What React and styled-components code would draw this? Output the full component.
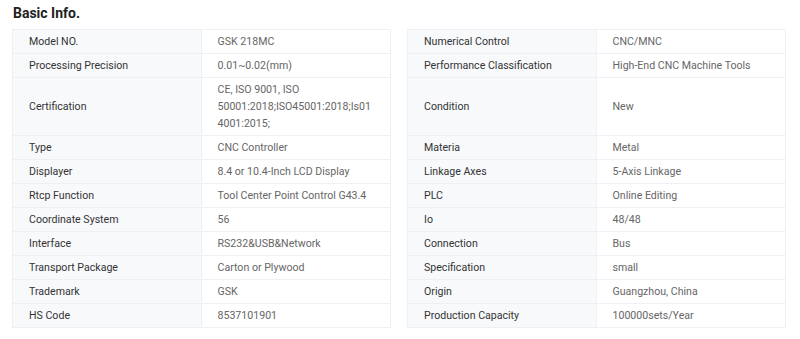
import React from 'react';
import styled, { createGlobalStyle } from 'styled-components';

const GlobalStyle = createGlobalStyle`
  html, body {
    margin: 0;
    padding: 0;
    background: #fff;
    font-family: Roboto, "Liberation Sans", Arial, sans-serif;
  }
`;

const Page = styled.div`
  width: 800px;
  padding: 4px 14px 0 12px;
  box-sizing: border-box;
`;

const Title = styled.h2`
  margin: 0 0 7px 1px;
  font-size: 14px;
  line-height: 18px;
  font-weight: 700;
  color: #222;
`;

// two pairs per line; pairs on the same line share a height
const SpecGrid = styled.div`
  display: grid;
  grid-template-columns: 1fr 1fr;
  column-gap: 16px;
`;

const Pair = styled.div`
  display: grid;
  grid-template-columns: 1fr 1fr;
  min-width: 0;
  border: 1px solid #edf0f5;
  border-top-width: ${({ $first }) => ($first ? '1px' : '0')};
`;

const Cell = styled.div`
  display: flex;
  align-items: center;
  min-width: 0;
  padding: 3px 16px;
  font-size: 10.6px;
  line-height: 17px;
  overflow-wrap: anywhere;
  color: ${({ $label }) => ($label ? '#333' : '#666')};
  background: ${({ $label }) => ($label ? '#f8f9fb' : '#fff')};
  border-right: ${({ $label }) => ($label ? '1px solid #edf0f5' : '0')};
`;

const rows = [
  [['Model NO.', 'GSK 218MC'], ['Numerical Control', 'CNC/MNC']],
  [['Processing Precision', '0.01~0.02(mm)'], ['Performance Classification', 'High-End CNC Machine Tools']],
  [['Certification', 'CE, ISO 9001, ISO 50001:2018;ISO45001:2018;Is014001:2015;'], ['Condition', 'New']],
  [['Type', 'CNC Controller'], ['Materia', 'Metal']],
  [['Displayer', '8.4 or 10.4-Inch LCD Display'], ['Linkage Axes', '5-Axis Linkage']],
  [['Rtcp Function', 'Tool Center Point Control G43.4'], ['PLC', 'Online Editing']],
  [['Coordinate System', '56'], ['Io', '48/48']],
  [['Interface', 'RS232&USB&Network'], ['Connection', 'Bus']],
  [['Transport Package', 'Carton or Plywood'], ['Specification', 'small']],
  [['Trademark', 'GSK'], ['Origin', 'Guangzhou, China']],
  [['HS Code', '8537101901'], ['Production Capacity', '100000sets/Year']],
];

const App = () => (
  <>
    <GlobalStyle />
    <Page>
      <Title>Basic Info.</Title>
      <SpecGrid>
        {rows.map((line, i) =>
          line.map(([label, value]) => (
            <Pair key={label} $first={i === 0}>
              <Cell $label>{label}</Cell>
              <Cell>{value}</Cell>
            </Pair>
          )),
        )}
      </SpecGrid>
    </Page>
  </>
);

export default App;
